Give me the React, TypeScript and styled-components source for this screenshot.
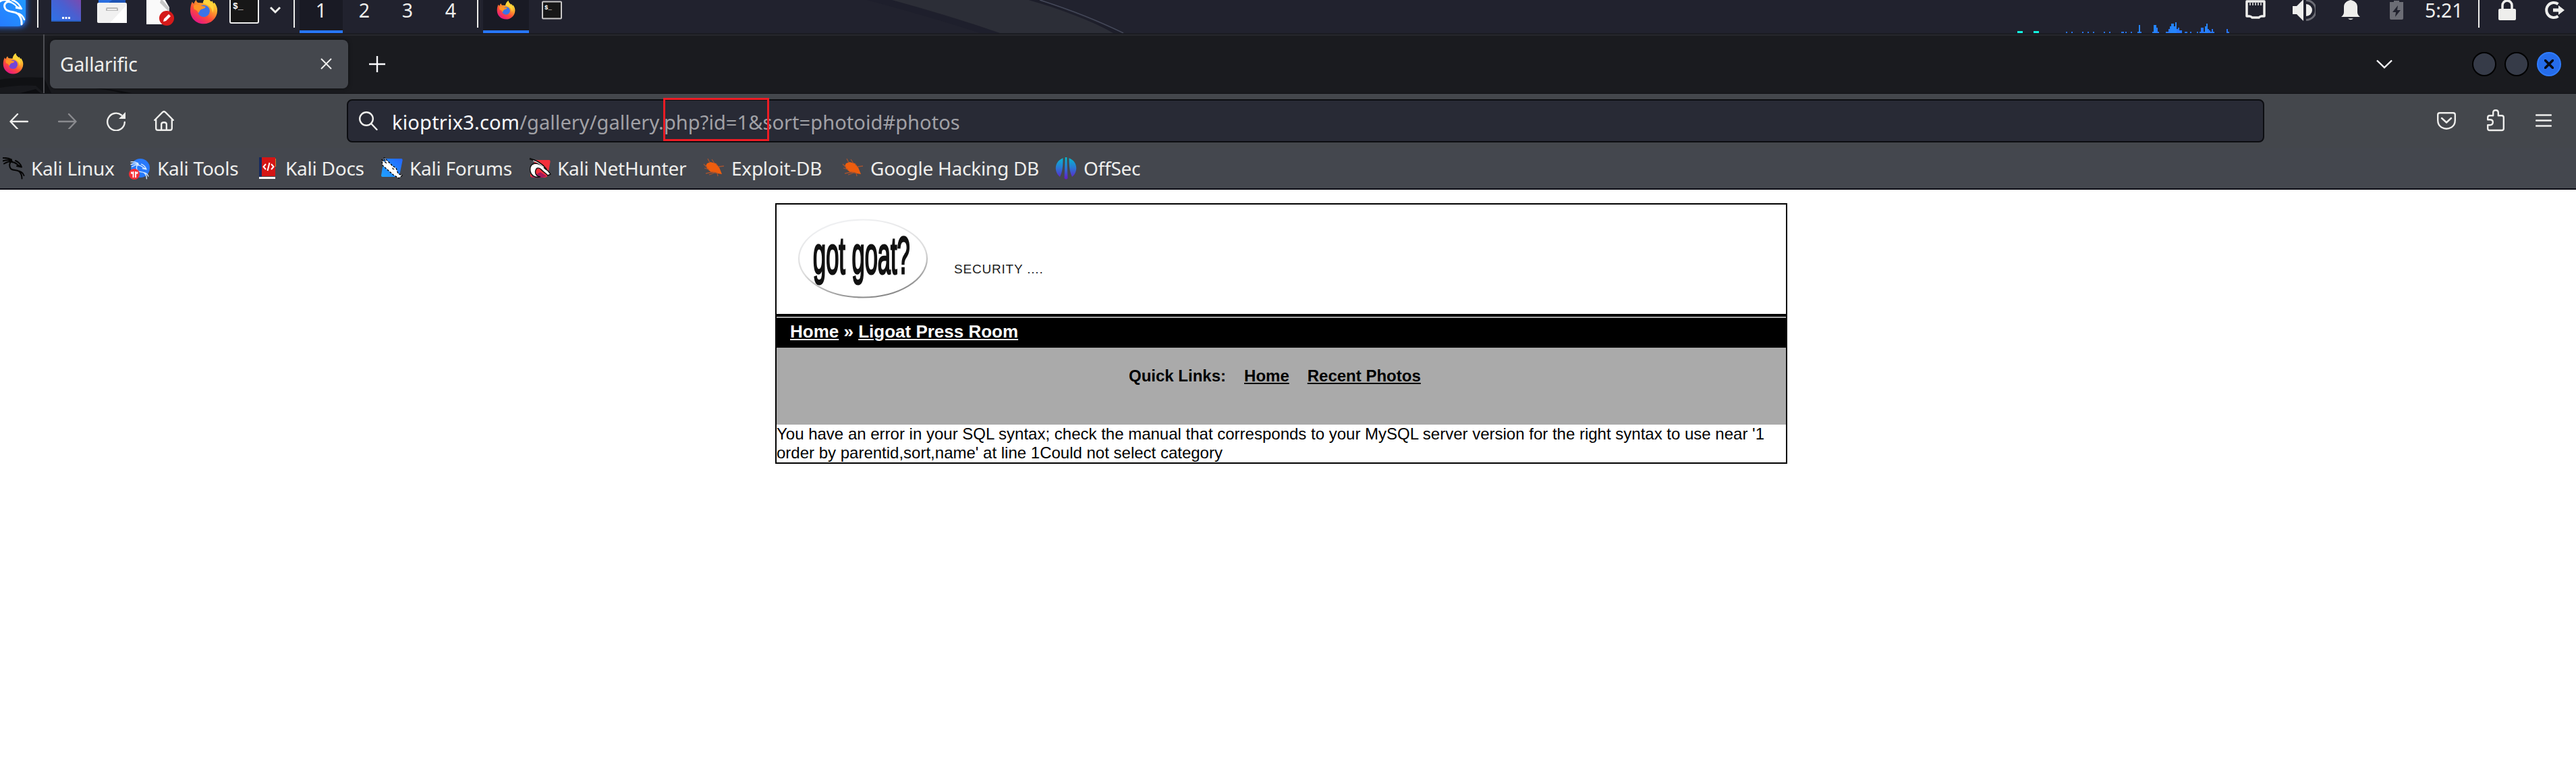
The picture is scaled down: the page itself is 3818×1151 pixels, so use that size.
import React, { ReactNode } from "react";
import styled, { createGlobalStyle } from "styled-components";

const GlobalStyle = createGlobalStyle`
  html, body { margin: 0; background: #fff; }
  body { font-family: "Noto Sans", sans-serif; overflow: hidden; }
`;

const Screen = styled.div`
  display: flex;
  flex-direction: column;
  width: 3818px;
  height: 1151px;
  overflow: hidden;
  background: #fff;
`;

/* ---------- desktop panel ---------- */

const Panel = styled.header`
  position: relative;
  height: 49px;
  flex: none;
  overflow: hidden;
  background: #21222e;
`;

const Wallpaper = styled.svg`
  position: absolute;
  left: 0;
  top: 0;
`;

const PanelRow = styled.div`
  position: relative;
  display: flex;
  align-items: center;
  height: 68px;
  margin-top: -19px;
  color: #eeeeec;
  font-size: 28.5px;
  line-height: 28px;
`;

const Slot = styled.div<{ $w: number; $ml?: number }>`
  flex: none;
  display: flex;
  width: ${(p) => p.$w}px;
  margin-left: ${(p) => p.$ml ?? 0}px;
  white-space: nowrap;
`;

const Divider = styled.div<{ $ml: number }>`
  flex: none;
  width: 2px;
  height: 52px;
  margin-left: ${(p) => p.$ml}px;
  background: #eeeeec;
`;

const Cell = styled.div<{ $w: number; $ml?: number; $active?: boolean }>`
  flex: none;
  box-sizing: border-box;
  display: flex;
  align-items: center;
  justify-content: center;
  width: ${(p) => p.$w}px;
  height: 68px;
  padding-top: 4px;
  margin-left: ${(p) => p.$ml ?? 0}px;
  border-bottom: 4px solid ${(p) => (p.$active ? "#2777ff" : "transparent")};
  background: ${(p) => (p.$active ? "#191a24" : "transparent")};
`;

const Graph = styled.div`
  flex: none;
  width: 314px;
  height: 68px;
  margin-left: 2138px;
`;

/* ---------- browser chrome ---------- */

const TabStrip = styled.div`
  position: relative;
  flex: none;
  box-sizing: border-box;
  display: flex;
  align-items: center;
  height: 90px;
  border-top: 2px solid #1b1c22;
  border-bottom: 1px solid #111216;
  background: linear-gradient(#26272c 2px, #1a1b1f 2px);
`;

const StripLine = styled.div`
  position: relative;
  flex: none;
  width: 2px;
  height: 87px;
  margin-left: 29px;
  background: #4d4e53;
`;

const Tab = styled.div`
  position: relative;
  flex: none;
  box-sizing: border-box;
  display: flex;
  align-items: center;
  justify-content: space-between;
  width: 442px;
  height: 72px;
  margin-left: 8px;
  padding: 0 24px 0 15px;
  border-radius: 8px;
  background: #44474d;
  color: #eeeeec;
  font-size: 28.3px;
  letter-spacing: -0.2px;
  box-shadow: 0 0 6px rgba(0, 0, 0, 0.45);
`;

const WindowButton = styled.div<{ $ml: number; $close?: boolean }>`
  flex: none;
  box-sizing: border-box;
  display: flex;
  align-items: center;
  justify-content: center;
  width: 36px;
  height: 36px;
  margin-left: ${(p) => p.$ml}px;
  border-radius: 50%;
  border: 2px solid ${(p) => (p.$close ? "#2f7cff" : "#000")};
  background: ${(p) => (p.$close ? "#256cea" : "#363b48")};
`;

const Toolbar = styled.nav`
  flex: none;
  display: flex;
  align-items: center;
  height: 80px;
  background: #44474c;
`;

const UrlBar = styled.div`
  position: relative;
  flex: none;
  box-sizing: border-box;
  display: flex;
  align-items: center;
  width: 2842px;
  height: 64px;
  margin-left: 256px;
  padding-left: 15px;
  border: 2px solid #0c0d11;
  border-radius: 8px;
  background: #282a35;
`;

const Url = styled.div`
  display: flex;
  margin: 2px 0 0 21px;
  white-space: nowrap;
  color: #a1a1a6;
  font-size: 29px;
  letter-spacing: 0.07px;
`;

const Host = styled.span`
  color: #fbfbfe;
  letter-spacing: 0.2px;
`;

const Marker = styled.div`
  position: absolute;
  left: 467px;
  top: -4px;
  box-sizing: border-box;
  width: 157px;
  height: 64px;
  border: 3px solid #ed1c24;
`;

const Bookmarks = styled.nav`
  flex: none;
  box-sizing: border-box;
  display: flex;
  align-items: center;
  height: 62px;
  padding-left: 4px;
  border-bottom: 2px solid #0c0c14;
  background: #44474e;
`;

const Bookmark = styled.div<{ $w: number }>`
  flex: none;
  display: flex;
  align-items: center;
  gap: 7px;
  width: ${(p) => p.$w}px;
  white-space: nowrap;
  color: #eeeeec;
  font-size: 28px;
  letter-spacing: -0.25px;
`;

/* ---------- web page ---------- */

const Page = styled.main`
  box-sizing: border-box;
  width: 1500px;
  margin: 20px 0 0 1149px;
  border: 2px solid #000;
  background: #fff;
  color: #000;
  font-family: "Liberation Sans", Arial, sans-serif;
  font-size: 24px;
`;

const Banner = styled.div`
  display: flex;
  height: 162px;
`;

const Tagline = styled.span`
  margin: 84px 0 0 37px;
  color: #1c1c1c;
  font-size: 19px;
  line-height: 23px;
  letter-spacing: 0.8px;
`;

const Crumbs = styled.div`
  box-sizing: border-box;
  height: 46px;
  border-top: 2px solid #aaa;
  padding: 5px 20px;
  background: #000;
  color: #fff;
  font-size: 26px;
  font-weight: bold;
  line-height: 30px;
`;

const Rule = styled.div`
  height: 4px;
  background: #000;
`;

const Link = styled.a`
  color: inherit;
  text-decoration: underline;
`;

const QuickLinks = styled.div`
  box-sizing: border-box;
  display: flex;
  gap: 27px;
  height: 114px;
  padding: 28px 0 0 522px;
  background: #aaa;
  font-weight: bold;
  line-height: 28px;
`;

const ErrorText = styled.div`
  line-height: 28px;
`;

/* ---------- icons ---------- */

const Drawing = styled.svg`
  flex: none;
  display: block;
`;

type SvgProps = { w: number; h: number; box?: string; children: ReactNode };
const Svg = ({ w, h, box, children }: SvgProps) => (
  <Drawing width={w} height={h} viewBox={box ?? `0 0 ${w} ${h}`} fill="none">
    {children}
  </Drawing>
);

const Firefox = ({ id, size, core }: { id: string; size: number; core: string }) => (
  <Svg w={size} h={size} box="0 0 32 32">
    <defs>
      <linearGradient id={id} x1="26" y1="3" x2="8" y2="30" gradientUnits="userSpaceOnUse">
        <stop offset="0" stopColor="#ffee3c" />
        <stop offset=".35" stopColor="#ffa12c" />
        <stop offset=".65" stopColor="#ff4b38" />
        <stop offset="1" stopColor="#e31587" />
      </linearGradient>
    </defs>
    <path d="M3 6.5C3.5 8 4.2 8.500 5 8.500C5.500 6.800 6.500 5.200 7.500 4.500C7.600 5.700 8.200 7 9.500 7.600L15 8C16 4.500 17 2 20 0C20.200 3 22 4.300 24.500 6.500L25.500 5.500C26 6.500 26.400 7.500 27 8.500L28 7.500C30.600 11 31.500 14 31.300 17C30.900 25.300 24.300 31.500 16 31.500C7.500 31.500 .8 25 .8 16.500C.8 12.700 1.500 9.500 3 6.500Z" fill={`url(#${id})`} />
    <circle cx="16" cy="17" r="6.800" fill={core} />
    <path d="M4.500 11C7 9 10 9 12.500 11L18 12C17.800 14 15.500 14.500 13.200 15C11.500 15.600 11.300 17.500 10 19.500C9.300 17 7.500 15.500 5 15Z" fill="#ff9326" />
    <path d="M15 8C16 4.500 17 2 20 0C20.200 3 22 4.300 24.500 7C27.500 10 28 15 26 19C25.500 13 22 10.500 15 8Z" fill="#ffd43a" />
  </Svg>
);

const dragon = (
  <>
    <path d="M0 1C5 .5 9 1.500 13 3.500M0 5.500C5 4 9 4 13 5M2 9.500C6 7 10 6 14 6" />
    <path d="M13 5C10 8 9 13 12 17C15 20 21 18 24.500 21C27 23.500 28.500 27 28.500 31.500M24.500 20.500C28 21.500 30.500 24 31.500 27" />
    <path d="M13 7C18 7 19 8.500 22 11L28 14.500L21 13M19 5C23.500 7 26.500 10 28 14.500" />
  </>
);

const KaliLogo = () => (
  <Svg w={50} h={68} box="0 -19 50 68">
    <defs>
      <filter id="kaliGlow" x="-40%" y="-40%" width="180%" height="180%">
        <feGaussianBlur stdDeviation="4" />
      </filter>
      <linearGradient id="kaliBg" x1="0" x2="1" y1="1" y2="0">
        <stop offset="0" stopColor="#2777ff" />
        <stop offset="1" stopColor="#1f9dff" />
      </linearGradient>
    </defs>
    <rect x="-14" y="-12" width="53" height="52" rx="10" fill="#2777ff" filter="url(#kaliGlow)" />
    <rect x="-14" y="-14" width="52" height="53" rx="12" fill="url(#kaliBg)" />
    <g stroke="#fff" strokeWidth="2.400" fill="none" strokeLinecap="round">
      <path d="M0 2C4 -1 9 -1 14 2C7 3 5 8 8 13C12 19 22 16 27 21C31 25 32.500 30 32 36" strokeWidth="3" />
      <path d="M27 20C31 21 34 24 36 29" />
      <path d="M10 3C17 2 21 5 25 10L32 13L24 11.500M18 0C25 2 29 7 32 13" />
    </g>
  </Svg>
);

const KaliBookmark = () => (
  <Svg w={35} h={33}>
    <g stroke="#050505" strokeWidth="2" strokeLinecap="round">{dragon}</g>
  </Svg>
);

const ToolsIcon = () => (
  <Svg w={35} h={33}>
    <circle cx="17" cy="16" r="14" fill="#2879fb" />
    <g stroke="#d8ebff" strokeWidth="1.700" strokeLinecap="round" transform="translate(3 6) scale(.82)">{dragon}</g>
    <circle cx="8" cy="25" r="8" fill="#f32f36" />
    <path d="M4 21.500V23.500H6.500V30M12.500 21.500V23.500H10V30M6.500 21V24M10 21V24" stroke="#fff" strokeWidth="1.800" />
  </Svg>
);

const DocsIcon = () => (
  <Svg w={35} h={33}>
    <path d="M3 0H7V32H3Z" fill="#152b61" />
    <path d="M26 2H28V14H26Z" fill="#d0812b" />
    <path d="M7 0H27V28H7Z" fill="#d41515" />
    <path d="M3 29H27V32H3Z" fill="#fff" />
    <path d="M13 10L9.500 14L13 18M21 10L24.500 14L21 18M18.500 8L15.500 20" stroke="#fff" strokeWidth="2" />
  </Svg>
);

const ForumsIcon = () => (
  <Svg w={35} h={33}>
    <defs>
      <linearGradient id="forum" x1="0" x2="1" y1="1" y2="0">
        <stop offset="0" stopColor="#1fa2ff" />
        <stop offset="1" stopColor="#2466ff" />
      </linearGradient>
    </defs>
    <path d="M4 2H30Q32 2 31.500 5L27 27Q26 29 24 29H2Q0 29 0 27Z" fill="url(#forum)" />
    <path d="M1 4L7 8L4 0L17 13L22 16L25 24L31 27L26 31L18 26L10 19L2 12Z" fill="#fff" stroke="#060606" strokeWidth="1.400" strokeDasharray="3 2" />
    <path d="M16 15L20 18L17 18Z" fill="#111" />
  </Svg>
);

const NetHunterIcon = () => (
  <Svg w={35} h={33}>
    <path d="M9 4H30Q32 4 31.500 7L28 26Q27 30 23 30H6Q1 30 2 25Z" fill="#f42f3b" />
    <path d="M3 29C10 31 20 31 26 28L17 22Z" fill="#a3195b" />
    <path d="M17 29C9 28 9 22 10 19C11 15 15 15 18 18C20 21 25 23 28 27L32 25L28 20L24 17C20 12 15 9 9 9C3 10 1 15 2 21C3 26 8 31 17 29Z" fill="#fff" stroke="#111" strokeWidth="1.400" />
    <path d="M1 2C10 5 18 8 26 18" stroke="#111" strokeWidth="2.400" />
    <path d="M6 5C13 7 17 10 22 15" stroke="#fff" strokeWidth="1.200" />
  </Svg>
);

const BugIcon = () => (
  <Svg w={35} h={33}>
    <path d="M6 9L11 7L19 9L24 15L26 20L28 25L22 24L12 22L7 18L4 13Z" fill="#ee5d0e" />
    <path d="M7 2L10 8M13 3L17 9M1 10L6 15M2 16L9 18M22 14L31 13M19 9L21 12M4 24L13 22L20 23M21 23L22 28M9 26L17 23" stroke="#a55330" strokeWidth="1.300" />
  </Svg>
);

const OffSecIcon = () => (
  <Svg w={35} h={33}>
    <defs>
      <linearGradient id="off" x1="0" x2="0" y1="0" y2="1">
        <stop offset="0" stopColor="#05bcd0" />
        <stop offset=".5" stopColor="#2c74d3" />
        <stop offset="1" stopColor="#6618c9" />
      </linearGradient>
    </defs>
    <path d="M12 1C-2 6 -2 22 7 29C11 21 11.500 12 11.500 1ZM20 1C34 6 34 22 25 29C21 21 20.500 12 20.500 1ZM14.700 0H17.300L18.500 31Q16 34 13.500 31Z" fill="url(#off)" />
  </Svg>
);

const cpuBars: [number, number][] = [
  [102, 2], [110, 2], [126, 2], [134, 2], [142, 2], [158, 2], [166, 2], [184, 2], [186, 2], [190, 2], [198, 2],
  [208, 2], [210, 12], [212, 2], [230, 2], [232, 12], [234, 12], [236, 8], [238, 2], [250, 2], [252, 2], [254, 6],
  [256, 10], [258, 14], [260, 14], [262, 10], [264, 16], [266, 6], [268, 8], [270, 4], [272, 4], [278, 2], [280, 2],
  [286, 2], [296, 2], [300, 2], [302, 8], [304, 8], [306, 2], [308, 10], [310, 14], [312, 6], [314, 4], [316, 2],
  [318, 6], [320, 2], [340, 6], [342, 2],
];

const bookmarks: { label: string; w: number; icon: ReactNode }[] = [
  { label: "Kali Linux", w: 187, icon: <KaliBookmark /> },
  { label: "Kali Tools", w: 190, icon: <ToolsIcon /> },
  { label: "Kali Docs", w: 184, icon: <DocsIcon /> },
  { label: "Kali Forums", w: 219, icon: <ForumsIcon /> },
  { label: "Kali NetHunter", w: 258, icon: <NetHunterIcon /> },
  { label: "Exploit-DB", w: 206, icon: <BugIcon /> },
  { label: "Google Hacking DB", w: 316, icon: <BugIcon /> },
  { label: "OffSec", w: 140, icon: <OffSecIcon /> },
];

const DesktopPanel = () => (
  <Panel>
    <Wallpaper width="3818" height="49">
      <path d="M1285 0H1322L1485 49H1452Q1390 28 1285 0Z" fill="#1e1f2c" />
      <path d="M1322 0H1525Q1600 22 1652 49H1482Q1405 22 1322 0Z" fill="#2c2e37" />
      <path d="M1525 0H1540L1664 49H1650Q1600 20 1525 0Z" fill="#1d1e2a" />
      <path d="M1541 0Q1610 22 1665 49" stroke="#45495a" strokeWidth="1.500" fill="none" />
    </Wallpaper>
    <PanelRow>
      <Slot $w={50}><KaliLogo /></Slot>
      <Divider $ml={5} />
      <Slot $w={44} $ml={19}>
        <Svg w={44} h={44} box="0 3 44 44">
          <defs>
            <linearGradient id="desk" x1="0" x2="1" y1="1" y2="0">
              <stop offset="0" stopColor="#2d73e8" />
              <stop offset=".5" stopColor="#4a5fd0" />
              <stop offset="1" stopColor="#8a43a5" />
            </linearGradient>
          </defs>
          <path d="M0 0H44V41H0Z" fill="url(#desk)" />
          <path d="M0 40H44V42H0Z" fill="#2860c4" />
          <path d="M16 35H19V38H16ZM20.500 35H23.500V38H20.500ZM25 35H28V38H25Z" fill="#fff" />
        </Svg>
      </Slot>
      <Slot $w={44} $ml={24}>
        <Svg w={44} h={42} box="0 1 44 42">
          <path d="M2 0H18L24 5H42V14H2Z" fill="#2b6fe0" />
          <path d="M18 10L24 6H42V12H18Z" fill="#1e54b5" />
          <path d="M0 13Q0 11 2 11H42Q44 11 44 13V39Q44 41 42 41H2Q0 41 0 39Z" fill="#f1f1f1" />
          <path d="M44 14V41H19Z" fill="#fff" />
          <path d="M13 23V20Q13 18 15 18H29Q31 18 31 20V23Z" fill="#b9b9b9" />
          <path d="M15 20H29V22H15Z" fill="#eee" />
        </Svg>
      </Slot>
      <Slot $w={42} $ml={29}>
        <Svg w={42} h={50}>
          <path d="M0 0H22L34 21V46H0Z" fill="#fafafa" />
          <path d="M22 8L34 22V28L20 14Z" fill="#c6c6c6" />
          <circle cx="30" cy="37" r="11" fill="#d51a1a" />
          <path d="M25 42L26 38L33 31L36 34L29 41Z" fill="#fff" />
        </Svg>
      </Slot>
      <Slot $w={42} $ml={22}><Firefox id="ffLauncher" size={42} core="#3b73e8" /></Slot>
      <Slot $w={44} $ml={17}>
        <Svg w={44} h={44} box="0 9 44 44">
          <rect x="1" y="2" width="42" height="48" rx="2" fill="#171717" stroke="#eee" strokeWidth="2" />
          <text x="5" y="29" fill="#fff" fontFamily="Liberation Mono" fontWeight="bold" fontSize="13">$_</text>
        </Svg>
      </Slot>
      <Slot $w={18} $ml={15}>
        <Svg w={18} h={12}><path d="M2 2L9 9L16 2" stroke="#eeeeec" strokeWidth="3" /></Svg>
      </Slot>
      <Divider $ml={18} />
      <Cell $w={64} $ml={7} $active>1</Cell>
      <Cell $w={64}>2</Cell>
      <Cell $w={64}>3</Cell>
      <Cell $w={64}>4</Cell>
      <Divider $ml={7} />
      <Cell $w={68} $ml={7} $active><Firefox id="ffTask" size={28} core="#3b73e8" /></Cell>
      <Cell $w={68}>
        <Svg w={30} h={28}>
          <rect x="1" y="1.500" width="28" height="25" rx="1" fill="#171717" stroke="#c9c7c7" strokeWidth="2" />
          <text x="4" y="13" fill="#fff" fontFamily="Liberation Mono" fontWeight="bold" fontSize="9">$_</text>
        </Svg>
      </Cell>
      <Graph>
        <Svg w={314} h={68} box="30 -19 314 68">
          <path d="M30 46H38V49H30ZM54 46H62V49H54Z" fill="#12f5e0" />
          {cpuBars.map(([x, h]) => (
            <rect key={x} x={x} y={49 - h} width="2" height={h} fill={h > 9 ? "#2584fb" : "#2777ff"} />
          ))}
        </Svg>
      </Graph>
      <Slot $w={32} $ml={23}>
        <Svg w={32} h={30} box="0 1 32 30">
          <path d="M3 3H29V25H25Q23 25 21 27H11Q9 25 7 25H3Z" stroke="#eeeeec" strokeWidth="3.500" strokeLinejoin="round" />
          <path d="M8 4V9M12 4V9M16 4V9M20 4V9M24 4V9" stroke="#b8b8ba" strokeWidth="2" />
        </Svg>
      </Slot>
      <Slot $w={34} $ml={39}>
        <Svg w={34} h={32}>
          <path d="M0 10H6L16 0V32L6 22H0Z" fill="#eeeeec" />
          <path d="M20 7A9 9 0 0 1 20 25Z" fill="#eeeeec" />
          <path d="M20 1.500A14 14 0 0 1 20 30.500" stroke="#6c6d75" strokeWidth="3" />
        </Svg>
      </Slot>
      <Slot $w={28} $ml={38}>
        <Svg w={28} h={30}>
          <path d="M14 0C19 1 24 4 24 10V18Q24 22 28 25H0Q4 22 4 18V10C4 4 9 1 14 0ZM10 27.500H18Q14 31 10 27.500Z" fill="#eeeeec" />
        </Svg>
      </Slot>
      <Slot $w={20} $ml={44}>
        <Svg w={20} h={28}>
          <path d="M0 2H6V0H14V2H20V26Q20 28 18 28H2Q0 28 0 26Z" fill="#6c6d75" />
          <path d="M12 7L4 17H9L8 24L16 14H11Z" fill="#21222e" />
        </Svg>
      </Slot>
      <Slot $w={76} $ml={32}>5:21</Slot>
      <Divider $ml={3} />
      <Slot $w={26} $ml={28}>
        <Svg w={26} h={30}>
          <path d="M6 15V8A7 7 0 0 1 20 8V15" stroke="#eeeeec" strokeWidth="3.500" />
          <rect y="13" width="26" height="17" rx="2" fill="#eeeeec" />
        </Svg>
      </Slot>
      <Slot $w={30} $ml={42}>
        <Svg w={30} h={28}>
          <path d="M20.500 5A11 11 0 1 0 20.500 23" stroke="#eeeeec" strokeWidth="4" />
          <path d="M13 11.500H21V7L30 14L21 21V16.500H13Z" fill="#eeeeec" />
        </Svg>
      </Slot>
    </PanelRow>
  </Panel>
);

const TabBar = () => (
  <TabStrip>
    <Wallpaper width="520" height="87">
      <path d="M0 67Q30 62 65 64L76 87H0Z" fill="#101114" />
      <path d="M0 79Q30 74 53 76L65 87H0Z" fill="#18191d" />
      <path d="M30 87L53 81L60 87Z" fill="#0c0d10" />
      <path d="M130 79Q165 80 195 87H180Q160 81 130 79Z" fill="#0e0f12" />
    </Wallpaper>
    <Slot $w={31} $ml={4}><Firefox id="ffFavicon" size={31} core="#7344d8" /></Slot>
    <StripLine />
    <Tab>
      Gallarific
      <Svg w={17} h={17}><path d="M1 1L16 16M16 1L1 16" stroke="#eeeeec" strokeWidth="2" /></Svg>
    </Tab>
    <Slot $w={24} $ml={31}>
      <Svg w={24} h={24}><path d="M12 0V24M0 12H24" stroke="#fbfbfe" strokeWidth="2.400" /></Svg>
    </Slot>
    <Slot $w={24} $ml={2951}>
      <Svg w={24} h={14}><path d="M1 1.500L12 12L23 1.500" stroke="#fbfbfe" strokeWidth="2.400" /></Svg>
    </Slot>
    <WindowButton $ml={118} />
    <WindowButton $ml={12} />
    <WindowButton $ml={12} $close>
      <Svg w={14} h={14}><path d="M1.500 1.500L12.500 12.500M12.500 1.500L1.500 12.500" stroke="#080c16" strokeWidth="3.600" strokeLinecap="round" /></Svg>
    </WindowButton>
  </TabStrip>
);

const line = { stroke: "#eeeeec", strokeWidth: 2.4, strokeLinecap: "round", strokeLinejoin: "round" } as const;

const NavBar = () => (
  <Toolbar>
    <Slot $w={28} $ml={14}>
      <Svg w={28} h={24} box="0 -1 28 24"><path d="M27 12H2M12 1L1.500 12L12 23" {...line} /></Svg>
    </Slot>
    <Slot $w={28} $ml={44}>
      <Svg w={28} h={24} box="0 -1 28 24"><path d="M1 12H26M16 1L26.500 12L16 23" {...line} stroke="#8a8b8f" /></Svg>
    </Slot>
    <Slot $w={28} $ml={44}>
      <Svg w={28} h={30} box="0 -1 28 30">
        <path d="M22 5.500A12.800 12.800 0 1 0 26.800 16" {...line} />
        <path d="M28 1V11H18Z" fill="#eeeeec" />
      </Svg>
    </Slot>
    <Slot $w={30} $ml={42}>
      <Svg w={30} h={32}>
        <path d="M1.200 15L13 3.200Q15 1.500 17 3.200L28.800 15M3.200 13.500V27Q3.200 29.800 6 29.800H24Q26.800 29.800 26.800 27V13.500M11.200 29.500V21Q11.200 18.200 15 18.200Q18.800 18.200 18.800 21V29.500" {...line} />
      </Svg>
    </Slot>
    <UrlBar>
      <Svg w={29} h={29}><circle cx="12" cy="11" r="9.800" {...line} /><path d="M19.500 18.500L27.500 27" {...line} /></Svg>
      <Url>
        <Host>kioptrix3.com</Host>
        <span>/gallery/gallery.php?id=1&amp;sort=photoid#photos</span>
      </Url>
      <Marker />
    </UrlBar>
    <Slot $w={28} $ml={256}>
      <Svg w={28} h={26}>
        <path d="M4 1.200H24Q26.800 1.200 26.800 4V12Q26.800 19 21.500 22.500Q14 27 6.500 22.500Q1.200 19 1.200 12V4Q1.200 1.200 4 1.200ZM7 9L14 15.500L21 9" {...line} />
      </Svg>
    </Slot>
    <Slot $w={26} $ml={46}>
      <Svg w={26} h={34}>
        <path d="M4 9.200H9.200V5Q9.200 1.200 13 1.200Q16.800 1.200 16.800 5V9.200H22Q24.800 9.200 24.800 12V28.500Q24.800 31 22 31H4Q1.200 31 1.200 28.500V23.200H4.500Q8.800 23.200 8.800 19Q8.800 15.200 4.500 15.200H1.200V12Q1.200 9.200 4 9.200Z" {...line} />
      </Svg>
    </Slot>
    <Slot $w={24} $ml={46}>
      <Svg w={24} h={20} box="0 1 24 20"><path d="M1 2.500H23M1 10.500H23M1 18.500H23" {...line} /></Svg>
    </Slot>
  </Toolbar>
);

const GoatLogo = () => (
  <Svg w={226} h={162}>
    <defs>
      <linearGradient id="rim" x1=".3" x2=".65" y1="0" y2="1">
        <stop offset="0" stopColor="#f0f1f3" />
        <stop offset=".55" stopColor="#dcdcdc" />
        <stop offset="1" stopColor="#858585" />
      </linearGradient>
      <filter id="soft"><feGaussianBlur stdDeviation=".7" /></filter>
    </defs>
    <ellipse cx="128" cy="80" rx="95" ry="57.500" stroke="url(#rim)" strokeWidth="2.200" filter="url(#soft)" />
    <text transform="translate(54 102) scale(.442 1)" fontSize="78" fontFamily="Liberation Sans, Arial" fill="#111" stroke="#111" strokeWidth="2.400" vectorEffect="non-scaling-stroke">got goat?</text>
  </Svg>
);

export default function App() {
  return (
    <Screen>
      <GlobalStyle />
      <DesktopPanel />
      <TabBar />
      <NavBar />
      <Bookmarks>
        {bookmarks.map((b) => (
          <Bookmark key={b.label} $w={b.w}>
            {b.icon}
            <span>{b.label}</span>
          </Bookmark>
        ))}
      </Bookmarks>
      <Page>
        <Banner>
          <GoatLogo />
          <Tagline>SECURITY ....</Tagline>
        </Banner>
        <Rule />
        <Crumbs>
          <Link>Home</Link> » <Link>Ligoat Press Room</Link>
        </Crumbs>
        <QuickLinks>
          <span>Quick Links:</span>
          <Link>Home</Link>
          <Link>Recent Photos</Link>
        </QuickLinks>
        <ErrorText>
          You have an error in your SQL syntax; check the manual that corresponds to your MySQL server version for the
          right syntax to use near '1 order by parentid,sort,name' at line 1Could not select category
        </ErrorText>
      </Page>
    </Screen>
  );
}
